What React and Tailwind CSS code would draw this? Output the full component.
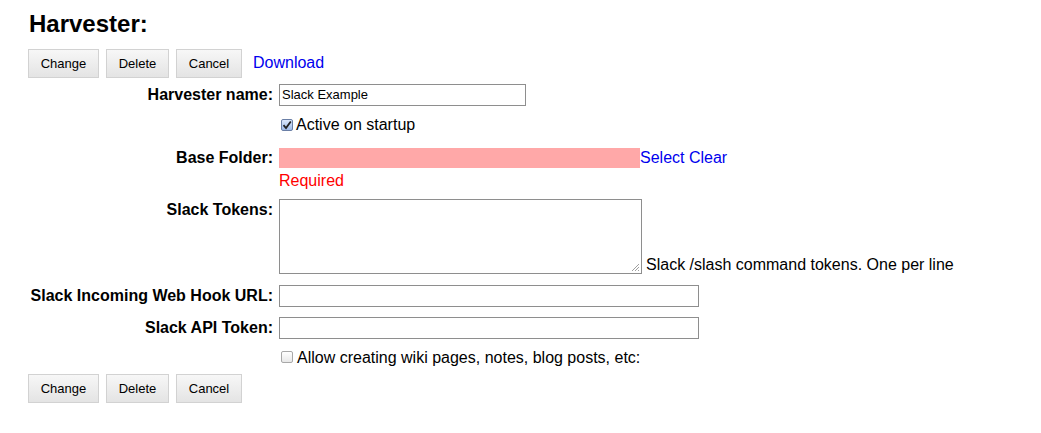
import React from "react";

const font = { fontFamily: '"Liberation Sans", Arial, Helvetica, sans-serif' };

function Btn({ children, w }) {
  return (
    <button
      className={
        "h-[29px] border border-[#d2d2d2] bg-gradient-to-b from-[#f7f7f7] to-[#e4e4e4] text-[13px] leading-[15px] text-black " +
        w
      }
    >
      {children}
    </button>
  );
}

function Buttons() {
  return (
    <>
      <Btn w="w-[71px]">Change</Btn>
      <Btn w="w-[63px]">Delete</Btn>
      <Btn w="w-[66px]">Cancel</Btn>
    </>
  );
}

function Box({ checked }) {
  return (
    <span
      className={
        "inline-flex w-[12px] h-[12px] items-center justify-center rounded-[2px] border " +
        (checked
          ? "border-[#6a7fa6] bg-gradient-to-b from-[#dbe7fb] to-[#9fbbe8]"
          : "border-[#a8a8a8] bg-gradient-to-b from-[#ffffff] to-[#e8e8e8]")
      }
    >
      {checked && (
        <svg width="10" height="10" viewBox="0 0 10 10">
          <path d="M1.5 5.2 L4 8 L8.8 1.5" fill="none" stroke="#222" strokeWidth="1.8" />
        </svg>
      )}
    </span>
  );
}

function Label({ children, className = "" }) {
  return (
    <div className={"w-[245px] shrink-0 text-right font-bold text-[16px] leading-[18px] text-black " + className}>
      {children}
    </div>
  );
}

export default function App() {
  return (
    <div className="w-[1041px] h-[433px] bg-white text-black pl-[28px]" style={font}>
      <h2 className="pt-[10px] text-[24px] leading-[28px] font-bold pl-px">Harvester:</h2>

      <div className="mt-[11px] flex items-center gap-[7px]">
        <Buttons />
        <a className="ml-[4px] text-[16px] leading-[18px] text-[#0000ee] -mt-[2px]">Download</a>
      </div>

      <div className="mt-[6px] flex items-center gap-[6px] h-[22px]">
        <Label>Harvester name:</Label>
        <div className="w-[247px] h-[22px] border border-[#8e8e8e] px-[2px] text-[13px] leading-[20px]">
          Slack Example
        </div>
      </div>

      <div className="mt-[9px] flex items-center h-[20px] pl-[251px]">
        <span className="ml-[2px] mr-[3px]"><Box checked /></span>
        <span className="text-[16px] leading-[18px]">Active on startup</span>
      </div>

      <div className="mt-[13px] flex items-center gap-[6px] h-[20px]">
        <Label>Base Folder:</Label>
        <div className="w-[361px] h-[20px] bg-[#ffa8a8]" />
        <span className="-ml-[6px] text-[16px] leading-[18px] text-[#0000ee]">Select Clear</span>
      </div>
      <div className="mt-[4px] pl-[251px] text-[16px] leading-[18px] text-[#ff0000]">Required</div>

      <div className="mt-[9px] flex items-end gap-[6px]">
        <Label className="self-start pt-[2px]">Slack Tokens:</Label>
        <div className="relative w-[363px] h-[75px] border border-[#8e8e8e]">
          <svg className="absolute right-[1px] bottom-[1px]" width="10" height="10" viewBox="0 0 10 10">
            <path d="M9 2 L2 9 M9 5 L5 9 M9 8 L8 9" stroke="#a0a0a0" strokeWidth="1" />
          </svg>
        </div>
        <span className="-ml-[2px] text-[16px] leading-[18px] mb-0">Slack /slash command tokens. One per line</span>
      </div>

      <div className="mt-[11px] flex items-center gap-[6px] h-[22px]">
        <Label>Slack Incoming Web Hook URL:</Label>
        <div className="w-[420px] h-[22px] border border-[#8e8e8e]" />
      </div>

      <div className="mt-[10px] flex items-center gap-[6px] h-[22px]">
        <Label>Slack API Token:</Label>
        <div className="w-[420px] h-[22px] border border-[#8e8e8e]" />
      </div>

      <div className="mt-[9px] flex items-center h-[20px] pl-[251px]">
        <span className="ml-[2px] mr-[4px]"><Box /></span>
        <span className="text-[16px] leading-[18px]">Allow creating wiki pages, notes, blog posts, etc:</span>
      </div>

      <div className="mt-[6px] flex items-center gap-[7px]">
        <Buttons />
      </div>
    </div>
  );
}
